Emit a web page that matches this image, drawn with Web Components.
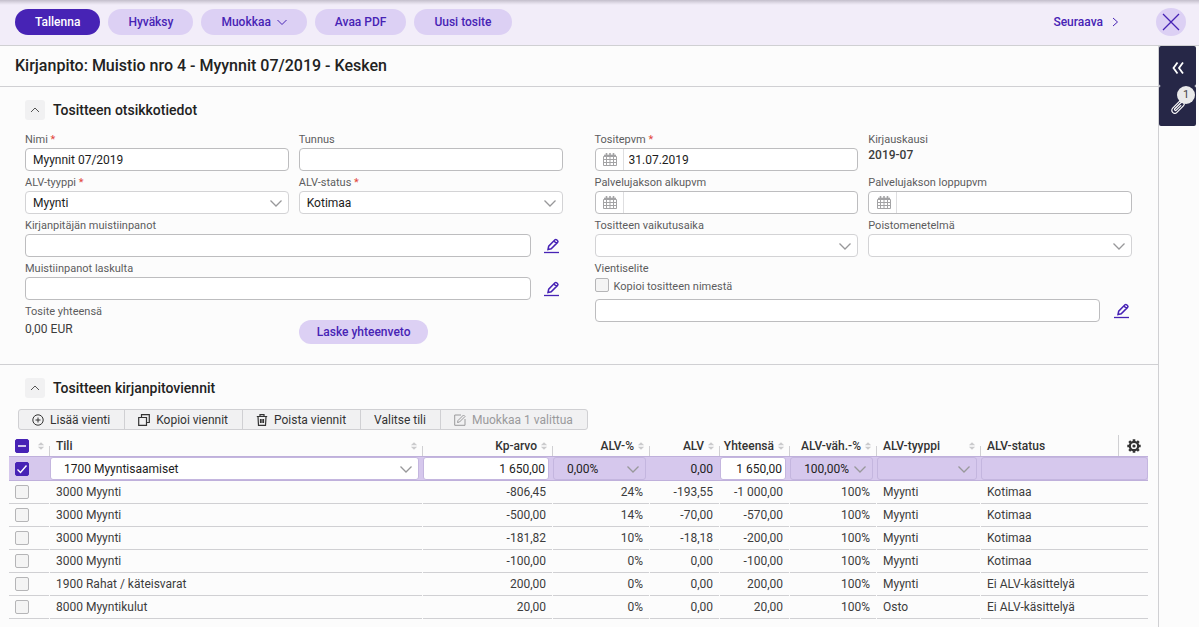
<!DOCTYPE html>
<html lang="fi">
<head>
<meta charset="utf-8">
<meta name="viewport" content="width=device-width, initial-scale=1">
<title>Kirjanpito: Muistio nro 4</title>
<style>
  :root {
    --accent: #4723b5;
    --pill: #dcd0f4;
    --line: #d0d0d3;
    --field-line: #bdbdbf;
    --page: #fcfcfc;
    --text: #3c3c3c;
    --label: #5c5c5e;
    --rail: #262747;
  }
  body {
    margin: 0;
    background: var(--page);
    color: var(--text);
    font-family: Roboto, "Noto Sans", sans-serif;
    font-size: 12px;
    line-height: 16px;
  }
</style>
</head>
<body>
<voucher-app></voucher-app>

<script>
const ICONS = {
  'chevron-down': [12, 12, '<path d="M.5 3.500L6 9l5.500-5.500" stroke-width="1.300"/>'],
  'chevron-small': [10, 12, '<path d="M.5 4L5 8.500 9.500 4"/>'],
  'chevron-right': [8, 12, '<path d="M2 2l4.500 4L2 10"/>'],
  'chevron-up': [10, 8, '<path d="M1 6l4-4 4 4"/>'],
  'close': [18, 18, '<path d="M1 1l16 16M17 1L1 17" stroke-width="1.300"/>'],
  'collapse': [14, 14, '<path d="M6.500 1.500L2.500 7l4 5.500M12 1.500L8 7l4 5.500" stroke-width="1.800"/>'],
  'clip': [14, 14, '<g transform="rotate(-45 7 8)" stroke-width="1.200" stroke-linecap="round"><path d="M13 5H2.500a3 3 0 0 0 0 6H12a2 2 0 0 0 0-4H3.500a1 1 0 0 0 0 2H10"/><path d="M13 5a2.600 2.600 0 0 1 2 3"/></g>'],
  'edit': [16, 16, '<path d="M4 11.500l.7-3.300 6.300-6.400c.5-.5 1.100-.5 1.600 0l1 1c.5.500.5 1.100 0 1.600l-6.400 6.400zM10 3l2.500 2.500" stroke-width="1.500"/><path d="M0 14.500h15" stroke-width="1.300"/>'],
  'calendar': [14, 13, '<path d="M.5 3.500h13v9H.5zM.5 6.500h13M.5 9.500h13M3.500 3.500v9M7 3.500v9M10.500 3.500v9"/><path d="M1 2.500h12" stroke-width="1.600"/><path d="M3.500 0v3M7 0v3M10.500 0v3" stroke-width="1.600"/>'],
  'plus': [12, 12, '<circle cx="6" cy="6" r="5.200"/><path d="M6 3.500v5M3.500 6h5"/>'],
  'copy': [12, 12, '<path d="M3.500 3V.7h7.800v7.800H9M.7 3.500h7.800v7.800H.7z" stroke-width="1.200"/>'],
  'trash': [12, 12, '<path d="M.8 2.500h10.400M4 2.300V.7h4v1.600M2 2.800l.5 8.500h7l.5-8.500M4.500 5v4M6 5v4M7.500 5v4" stroke-width="1.200"/>'],
  'edit-box': [12, 12, '<path d="M7 1H.7v10.300H11V5"/><path d="M3.500 8.500l.5-2L9.500 1l1.500 1.500L5.500 8z"/>'],
  'gear': [14, 14, '<circle cx="7" cy="7" r="4.200" stroke-width="2.200"/><circle cx="7" cy="7" r="1.600" fill="currentColor" stroke="none"/><path d="M7 .3v2M7 11.700v2M.3 7h2M11.700 7h2M2.200 2.200l1.500 1.500M10.300 10.300l1.500 1.500M11.800 2.200l-1.500 1.500M3.700 10.300l-1.500 1.500" stroke-width="2.600"/>'],
  'sort': [8, 8, '<path d="M4 .2L7.200 3.300H.8zM4 7.800L7.200 4.700H.8z" fill="currentColor" stroke="none"/>']
};

function define(name, setup) {
  customElements.define(name, class extends HTMLElement {
    connectedCallback() {
      if (this.shadowRoot) return;
      const root = this.attachShadow({ mode: 'open' });
      root.innerHTML = setup(this);
    }
  });
}

const BASE = `
  *, *::before { box-sizing: border-box; }
  button, input, select { font: inherit; color: inherit; margin: 0; }
  button { border: 0; padding: 0; background: none; cursor: pointer; }
`;

const CHECKBOX = `
  input[type=checkbox] {
    appearance: none; display: block; flex: none; width: 14px; height: 14px;
    border: 1px solid #b5b5b7; border-radius: 2px; background: #f4f4f4;
  }
  input[type=checkbox]:checked, input[type=checkbox].mixed {
    border-color: var(--accent);
    background: var(--accent) center / 12px 12px no-repeat;
  }
  input[type=checkbox]:checked { background-image: url("data:image/svg+xml,%3Csvg xmlns='http://www.w3.org/2000/svg' viewBox='0 0 12 12'%3E%3Cpath d='M1.500 6.500l3 3 6-7' fill='none' stroke='white' stroke-width='1.400'/%3E%3C/svg%3E"); }
  input[type=checkbox].mixed { background-image: url("data:image/svg+xml,%3Csvg xmlns='http://www.w3.org/2000/svg' viewBox='0 0 12 12'%3E%3Cpath d='M2 6h8' fill='none' stroke='white' stroke-width='1.400'/%3E%3C/svg%3E"); }
`;

define('app-icon', el => {
  const [w, h, body] = ICONS[el.getAttribute('name')];
  return `<style>:host { display: inline-flex; flex: none; } svg { display: block; overflow: visible; }</style>
    <svg width="${w}" height="${h}" viewBox="0 0 ${w} ${h}" fill="none" stroke="currentColor" aria-hidden="true">${body}</svg>`;
});

define('pill-button', () => `<style>${BASE}
  :host { display: inline-flex; }
  button {
    display: flex; align-items: center; gap: 6px; height: 26px; padding: 0 20px;
    border-radius: 13px; background: var(--pill); color: var(--accent); font-weight: 500; white-space: nowrap;
  }
  :host([primary]) button { background: var(--accent); color: #fff; }
  :host([compact]) button { height: 24px; padding: 0 18px; }
  </style><button type="button"><slot></slot><slot name="icon"></slot></button>`);

define('top-bar', () => `<style>${BASE}
  :host {
    display: flex; align-items: center; gap: 8px; height: 46px; padding: 0 13px 2px 15px; box-sizing: border-box;
    border-bottom: 1px solid var(--line);
    background: linear-gradient(#c3becb, #e2dde9 3px, #f2edf9 5px);
  }
  .next { display: flex; align-items: center; gap: 8px; margin-left: auto; margin-right: 29px; color: var(--accent); font-weight: 500; text-decoration: none; }
  .close { display: grid; place-items: center; width: 30px; height: 28px; border-radius: 50%; background: var(--pill); color: var(--accent); }
  </style>
  <pill-button primary>Tallenna</pill-button>
  <pill-button>Hyväksy</pill-button>
  <pill-button>Muokkaa<app-icon slot="icon" name="chevron-small"></app-icon></pill-button>
  <pill-button>Avaa PDF</pill-button>
  <pill-button>Uusi tosite</pill-button>
  <a class="next" href="#next">Seuraava <app-icon name="chevron-right"></app-icon></a>
  <button class="close" type="button" aria-label="Sulje"><app-icon name="close"></app-icon></button>`);

define('page-title', () => `<style>
  :host { display: block; padding: 8px 15px; border-bottom: 1px solid var(--line); }
  h1 { margin: 0; font-size: 16px; line-height: 24px; font-weight: 500; color: #222; }
  </style><h1><slot></slot></h1>`);

define('side-rail', () => `<style>${BASE}
  :host { display: flex; flex-direction: column; width: 37px; color: #fff; }
  button { position: relative; display: grid; place-items: center; height: 40px; border-radius: 2px; background: var(--rail); }
  .collapse { padding-top: 4px; }
  .badge {
    position: absolute; top: 0; right: 1px; width: 18px; height: 18px; border-radius: 50%;
    background: #e9e9ea; color: #444; font-size: 11px; line-height: 18px; text-align: center;
  }
  </style>
  <button class="collapse" type="button" aria-label="Avaa"><app-icon name="collapse"></app-icon></button>
  <button type="button" aria-label="Liitteet"><app-icon name="clip"></app-icon><span class="badge">1</span></button>`);

define('section-panel', el => `<style>${BASE}
  :host { display: block; }
  header { display: flex; align-items: center; gap: 8px; padding: 13px 25px 0; }
  button { display: grid; place-items: center; width: 20px; height: 20px; border-radius: 3px; background: #f1f1f2; color: #555; }
  h2 { margin: 0; font-size: 14px; line-height: 20px; font-weight: 500; color: #222; }
  </style>
  <header><button type="button" aria-label="Piilota"><app-icon name="chevron-up"></app-icon></button><h2>${el.getAttribute('heading')}</h2></header>
  <slot></slot>`);

const FIELD = `${BASE}
  :host { display: block; min-width: 0; }
  label, .label { display: block; font-size: 11px; line-height: 16px; color: var(--label); white-space: nowrap; }
  .req { color: #e2473c; }
  .box {
    display: flex; align-items: center; height: 23px; border: 1px solid var(--field-line); border-radius: 4px;
    background: #fff; color: #1c1c1c; flex: 1; min-width: 0;
  }
  .box input, .box select { border: 0; outline: 0; background: none; flex: 1; min-width: 0; height: 21px; padding: 0 7px; }
`;
const labelOf = el => `<label for="f">${el.getAttribute('label')}${el.hasAttribute('required') ? ' <span class="req">*</span>' : ''}</label>`;

define('text-field', el => `<style>${FIELD}
  .row { display: flex; align-items: center; gap: 11px; }
  .row button { color: var(--accent); width: 21px; display: grid; place-items: center; }
  </style>
  ${el.hasAttribute('label') ? labelOf(el) : ''}
  <div class="row"><div class="box"><input id="f" type="text" value="${el.getAttribute('value') || ''}" ${el.hasAttribute('label') ? '' : `aria-label="${el.getAttribute('name')}"`}></div>
  ${el.hasAttribute('editable') ? '<button type="button" aria-label="Muokkaa"><app-icon name="edit"></app-icon></button>' : ''}</div>`);

define('date-field', el => `<style>${FIELD}
  .box input { padding: 0 5px; }
  button { display: grid; place-items: center; width: 28px; height: 21px; padding-left: 2px; border-right: 1px solid #dedee0; color: #a3a3a5; }
  </style>
  ${labelOf(el)}
  <div class="box"><button type="button" aria-label="Kalenteri"><app-icon name="calendar"></app-icon></button><input id="f" type="text" value="${el.getAttribute('value') || ''}"></div>`);

define('select-field', el => `<style>${FIELD}
  .box { display: grid; align-items: center; border-color: #d3d3d5; }
  .box select { appearance: none; grid-area: 1 / 1; width: 100%; padding-right: 28px; }
  app-icon { grid-area: 1 / 1; justify-self: end; margin-right: 6px; color: #98989a; pointer-events: none; }
  </style>
  ${labelOf(el)}
  <div class="box"><select id="f"><option>${el.getAttribute('value') || ''}</option></select><app-icon name="chevron-down"></app-icon></div>`);

define('static-field', el => `<style>${FIELD}
  .value { line-height: 18px; }
  :host([strong]) .value { font-weight: 500; line-height: 14px; }
  </style><span class="label">${el.getAttribute('label')}</span><div class="value"><slot></slot></div>`);

define('memo-field', () => `<style>${FIELD}${CHECKBOX}
  .copy { display: flex; align-items: center; gap: 5px; height: 18px; margin-bottom: 4px; }
  .copy label { padding-top: 2px; }
  .copy input { margin-bottom: 2px; }
  </style>
  <span class="label">Vientiselite</span>
  <div class="copy"><input id="c" type="checkbox"><label for="c">Kopioi tositteen nimestä</label></div>
  <text-field name="Vientiselite" editable></text-field>`);

define('voucher-form', () => `<style>
  :host {
    display: grid; grid-template-columns: 1fr 1fr; column-gap: 32px;
    padding: 12px 26px 20px 25px; border-bottom: 1px solid var(--line);
  }
  .half { display: grid; grid-template-columns: 1fr 1fr; gap: 4px 10px; align-content: start; }
  .wide { grid-column: 1 / -1; }
  .total { padding-top: 16px; }
  </style>
  <div class="half">
    <text-field label="Nimi" required value="Myynnit 07/2019"></text-field>
    <text-field label="Tunnus"></text-field>
    <select-field label="ALV-tyyppi" required value="Myynti"></select-field>
    <select-field label="ALV-status" required value="Kotimaa"></select-field>
    <text-field class="wide" label="Kirjanpitäjän muistiinpanot" editable></text-field>
    <text-field class="wide" label="Muistiinpanot laskulta" editable></text-field>
    <static-field label="Tosite yhteensä">0,00 EUR</static-field>
    <pill-button class="total" compact>Laske yhteenveto</pill-button>
  </div>
  <div class="half">
    <date-field label="Tositepvm" required value="31.07.2019"></date-field>
    <static-field label="Kirjauskausi" strong>2019-07</static-field>
    <date-field label="Palvelujakson alkupvm"></date-field>
    <date-field label="Palvelujakson loppupvm"></date-field>
    <select-field label="Tositteen vaikutusaika"></select-field>
    <select-field label="Poistomenetelmä"></select-field>
    <memo-field class="wide"></memo-field>
  </div>`);

define('entry-toolbar', () => `<style>${BASE}
  :host { display: flex; padding: 11px 18px 0; }
  div { display: flex; border: 1px solid var(--line); border-radius: 3px; background: #f1f1f2; }
  button { display: flex; align-items: center; gap: 6px; height: 19px; padding: 0 14px 0 13px; color: #333; white-space: nowrap; }
  button + button { border-left: 1px solid var(--line); }
  button:disabled { color: #9a9a9c; }
  </style>
  <div role="toolbar" aria-label="Viennit">
    <button type="button"><app-icon name="plus"></app-icon>Lisää vienti</button>
    <button type="button"><app-icon name="copy"></app-icon>Kopioi viennit</button>
    <button type="button"><app-icon name="trash"></app-icon>Poista viennit</button>
    <button type="button">Valitse tili</button>
    <button type="button" disabled><app-icon name="edit-box"></app-icon>Muokkaa 1 valittua</button>
  </div>`);

const COLUMNS = [['Tili', ''], ['Kp-arvo', 'n'], ['ALV-%', 'n'], ['ALV', 'n'], ['Yhteensä', 'n'], ['ALV-väh.-%', 'n'], ['ALV-tyyppi', '']];
const ROWS = [
  ['3000 Myynti', '-806,45', '24%', '-193,55', '-1 000,00', '100%', 'Myynti', 'Kotimaa'],
  ['3000 Myynti', '-500,00', '14%', '-70,00', '-570,00', '100%', 'Myynti', 'Kotimaa'],
  ['3000 Myynti', '-181,82', '10%', '-18,18', '-200,00', '100%', 'Myynti', 'Kotimaa'],
  ['3000 Myynti', '-100,00', '0%', '0,00', '-100,00', '100%', 'Myynti', 'Kotimaa'],
  ['1900 Rahat / käteisvarat', '200,00', '0%', '0,00', '200,00', '100%', 'Myynti', 'Ei ALV-käsittelyä'],
  ['8000 Myyntikulut', '20,00', '0%', '0,00', '20,00', '100%', 'Osto', 'Ei ALV-käsittelyä']
];
const picker = (name, value, cls) => `<div class="edit ${cls}"><select aria-label="${name}"><option>${value}</option></select><app-icon name="chevron-down"></app-icon></div>`;
const entry = (name, value, cls) => `<div class="edit ${cls}"><input type="text" aria-label="${name}" value="${value}"></div>`;

define('entry-table', () => `<style>${BASE}${CHECKBOX}
  :host { display: block; padding: 0 10px 8px 9px; }
  table { width: 100%; border-collapse: separate; border-spacing: 0; table-layout: fixed; }
  th, td { padding: 0; text-align: left; white-space: nowrap; }
  th { height: 26px; font-weight: 500; color: #333; background: linear-gradient(var(--line), var(--line)) right bottom / 1px 10px no-repeat; }
  th:last-child { background-image: none; }
  .head { display: flex; align-items: center; gap: 4px; padding: 5px 5px 0 6px; }
  .head app-icon { color: #cbcbcd; margin-left: auto; }
  .n .head { gap: 3px; padding-left: 2px; }
  .n .head span { flex: 1; text-align: right; }
  .status { display: flex; height: 26px; padding-left: 6px; }
  .status span { flex: 1; padding-top: 8px; }
  .status button { display: grid; place-items: center; width: 30px; margin-top: 5px; border-left: 1px solid var(--line); color: #333; }
  tbody tr:not(.sel) td {
    height: 23px; padding: 0 7px 1px 6px;
    background: linear-gradient(var(--line), var(--line)) left bottom / calc(100% - 1px) 1px no-repeat;
  }
  tbody tr:not(.sel) td:last-child { background-size: 100% 1px; }
  td.n { text-align: right; }
  .sel td { height: 25px; border-top: 1px solid #bfb0db; border-bottom: 1px solid #bfb0db; background: #d6c8ed; color: #222; }
  .sel td.n { padding-right: 7px; }
  .sel td.pad { padding-left: 6px; }
  .sel td.ed { padding: 0 4px 0 0; }
  .sel td.last { padding: 0; }
  .edit { display: grid; align-items: center; height: 23px; border: 1px solid #c4b6df; border-radius: 3px; }
  .edit input, .edit select { grid-area: 1 / 1; width: 100%; min-width: 0; height: 21px; border: 0; background: none; padding: 0 3px; }
  .edit select { appearance: none; padding: 0 27px 0 13px; }
  .edit app-icon { grid-area: 1 / 1; justify-self: end; margin-right: 6px; color: #98989a; pointer-events: none; }
  .white { background: #fff; color: #1c1c1c; }
  .right input { text-align: right; }
  .right select { padding-left: 3px; padding-right: 23px; text-align: right; }
  </style>
  <table>
    <colgroup><col style="width:41px"><col><col style="width:130px"><col style="width:97px"><col style="width:70px"><col style="width:70px"><col style="width:87px"><col style="width:104px"><col style="width:167px"></colgroup>
    <thead><tr>
      <th><div class="head"><input type="checkbox" class="mixed" aria-label="Valitse kaikki"><app-icon name="sort"></app-icon></div></th>
      ${COLUMNS.map(([t, c]) => `<th class="${c}"><div class="head"><span>${t}</span><app-icon name="sort"></app-icon></div></th>`).join('')}
      <th><div class="status"><span>ALV-status</span><button type="button" aria-label="Asetukset"><app-icon name="gear"></app-icon></button></div></th>
    </tr></thead>
    <tbody>
      <tr class="sel">
        <td class="pad"><input type="checkbox" checked aria-label="Valitse rivi"></td>
        <td class="ed">${picker('Tili', '1700 Myyntisaamiset', 'white')}</td>
        <td class="ed">${entry('Kp-arvo', '1 650,00', 'white right')}</td>
        <td class="ed">${picker('ALV-%', '0,00%', '')}</td>
        <td class="n">0,00</td>
        <td class="ed">${entry('Yhteensä', '1 650,00', 'white right')}</td>
        <td class="ed">${picker('ALV-väh.-%', '100,00%', 'right')}</td>
        <td class="ed">${picker('ALV-tyyppi', '', '')}</td>
        <td class="ed last">${entry('ALV-status', '', '')}</td>
      </tr>
      ${ROWS.map(r => `<tr><td><input type="checkbox" aria-label="Valitse rivi"></td>${r.map((v, i) => `<td class="${i > 0 && i < 6 ? 'n' : ''}">${v}</td>`).join('')}</tr>`).join('')}
    </tbody>
  </table>`);

define('voucher-app', () => `<style>
  :host { display: flex; flex-direction: column; min-height: 100vh; }
  .body { display: flex; flex: 1; }
  main { flex: 1; min-width: 0; border-right: 1px solid var(--line); }
  side-rail { margin-right: 3px; }
  </style>
  <top-bar></top-bar>
  <div class="body">
    <main>
      <page-title>Kirjanpito: Muistio nro 4 - Myynnit 07/2019 - Kesken</page-title>
      <section-panel heading="Tositteen otsikkotiedot"><voucher-form></voucher-form></section-panel>
      <section-panel heading="Tositteen kirjanpitoviennit"><entry-toolbar></entry-toolbar><entry-table></entry-table></section-panel>
    </main>
    <side-rail></side-rail>
  </div>`);
</script>
</body>
</html>
